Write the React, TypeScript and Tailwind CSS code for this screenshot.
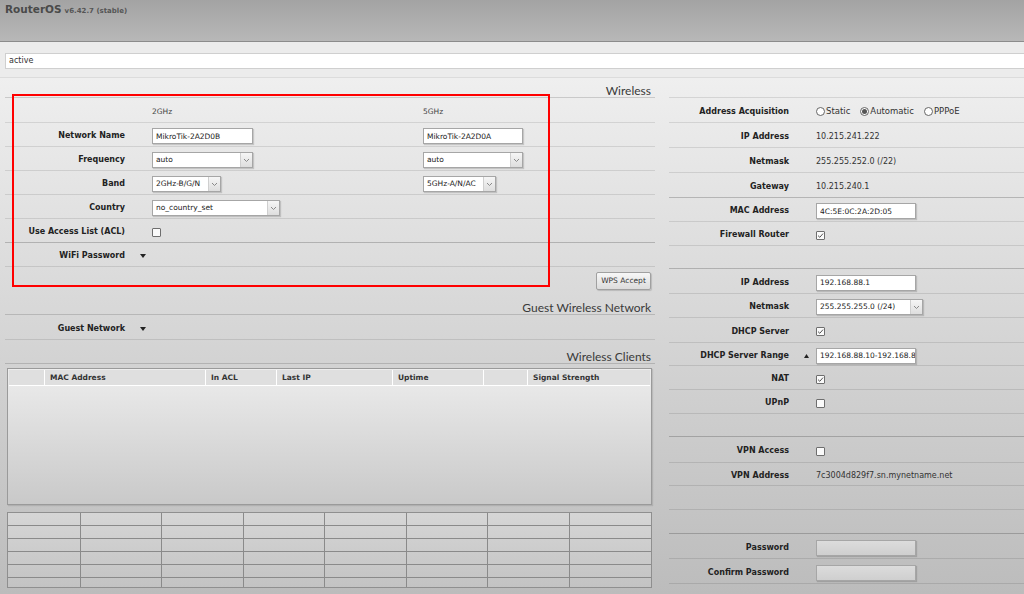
import React from "react";

type Line = "light" | "dark" | "none";

function Chevron() {
  return (
    <svg width="7" height="5" viewBox="0 0 7 5">
      <path d="M1 1 L3.5 3.5 L6 1" fill="none" stroke="#8a8a8a" strokeWidth="1" />
    </svg>
  );
}

function Select({ className, value }: { className: string; value: string }) {
  return (
    <div
      className={`flex h-[16px] items-stretch border border-[#a6a6a6] bg-white shadow-[1px_1px_1px_rgba(0,0,0,0.15)] ${className}`}
    >
      <span className="flex flex-1 items-center overflow-hidden whitespace-nowrap pl-[3px] text-[7.5px] text-[#222]">
        {value}
      </span>
      <span className="flex w-[12px] items-center justify-center border-l border-[#cfcfcf] bg-gradient-to-b from-[#f6f6f6] to-[#dedede]">
        <Chevron />
      </span>
    </div>
  );
}

function Input({ className, value, gray }: { className: string; value?: string; gray?: boolean }) {
  return (
    <input
      readOnly
      value={value ?? ""}
      className={`block h-[16px] border border-[#a6a6a6] pl-[3px] pr-0 text-[7.5px] text-[#222] shadow-[1px_1px_1px_rgba(0,0,0,0.15)] outline-none ${
        gray ? "bg-gradient-to-b from-[#dcdcdc] to-[#cfcfcf]" : "bg-white"
      } ${className}`}
    />
  );
}

function Check({ checked }: { checked?: boolean }) {
  return (
    <div className="flex h-[9px] w-[9px] items-center justify-center rounded-[1px] border border-[#6e6e6e] bg-[#fafafa]">
      {checked && (
        <svg width="7" height="7" viewBox="0 0 7 7">
          <path d="M1 3.6 L2.8 5.3 L6 1.6" fill="none" stroke="#555" strokeWidth="1" />
        </svg>
      )}
    </div>
  );
}

function Radio({ checked, label }: { checked?: boolean; label: string }) {
  return (
    <div className="flex items-center">
      <span className="flex h-[9px] w-[9px] items-center justify-center rounded-full border border-[#666] bg-white">
        {checked && <span className="h-[5px] w-[5px] rounded-full bg-[#555]" />}
      </span>
      <span className="ml-[1px] text-[8.5px] text-[#333]">{label}</span>
    </div>
  );
}

function TriDown() {
  return (
    <svg width="6" height="4" viewBox="0 0 6 4">
      <path d="M0 0 H6 L3 4 Z" fill="#222" />
    </svg>
  );
}

function TriUp() {
  return (
    <svg width="5" height="4" viewBox="0 0 5 4">
      <path d="M0 4 H5 L2.5 0 Z" fill="#222" />
    </svg>
  );
}

function Row({
  h,
  label,
  line = "light",
  gap,
  children,
}: {
  h: string;
  label?: string;
  line?: Line;
  gap?: React.ReactNode;
  children?: React.ReactNode;
}) {
  const lineCls =
    line === "dark" ? "border-b border-black/20" : line === "none" ? "" : "border-b border-black/10";
  return (
    <div className={`flex items-center pt-[3px] ${h} ${lineCls}`}>
      <div className="w-[120px] shrink-0 whitespace-nowrap text-right text-[8px] font-bold text-[#222]">{label}</div>
      <div className="flex w-[27px] shrink-0 items-center pl-[15px]">{gap}</div>
      {children}
    </div>
  );
}

function Val({ children }: { children: React.ReactNode }) {
  return <span className="whitespace-nowrap text-[8px] text-[#333]">{children}</span>;
}

function Heading({ h, children }: { h: string; children: React.ReactNode }) {
  return (
    <div
      className={`flex items-end justify-end border-b border-black/15 pr-[4px] font-['Lato',sans-serif] text-[12px] leading-[12px] text-[#3a3a3a] ${h}`}
    >
      {children}
    </div>
  );
}

function Col({ children }: { children?: React.ReactNode }) {
  return <div className="flex w-[271px] shrink-0 items-center">{children}</div>;
}

export default function App() {
  const rows = [0, 1, 2, 3, 4, 5];
  const cols = [0, 1, 2, 3, 4, 5, 6, 7];
  return (
    <div className="relative flex h-[594px] w-[1024px] flex-col overflow-hidden bg-[#ececec] font-['DejaVu_Sans',sans-serif] text-[#222]">
      {/* header */}
      <div className="flex h-[42px] shrink-0 items-baseline border-b border-[#8c8c8c] bg-gradient-to-b from-[#a3a3a3] to-[#b8b8b8] pl-[5px] pt-[2px] leading-[14px]">
        <span className="text-[10.5px] font-bold text-[#4a4a4a]">RouterOS</span>
        <span className="ml-[3px] text-[7px] font-bold text-[#555]">v6.42.7 (stable)</span>
      </div>

      {/* status */}
      <div className="flex shrink-0 border-b border-[#dcdcdc] pb-[8px] pl-[5px] pt-[11px]">
        <div className="flex h-[16px] flex-1 items-center border border-r-0 border-[#cfcfcf] bg-white pl-[3px] text-[8px] text-[#333]">
          active
        </div>
      </div>

      {/* main */}
      <div className="flex flex-1 bg-gradient-to-b from-[#efefef] to-[#bcbcbc]">
        {/* left column */}
        <div className="ml-[5px] flex w-[650px] shrink-0 flex-col">
          <Heading h="h-[20px]">Wireless</Heading>
          <Row h="h-[25px]">
            <Col>
              <span className="text-[7.5px] text-[#444]">2GHz</span>
            </Col>
            <span className="text-[7.5px] text-[#444]">5GHz</span>
          </Row>
          <Row h="h-[24px]" label="Network Name">
            <Col>
              <Input className="w-[101px]" value="MikroTik-2A2D0B" />
            </Col>
            <Input className="w-[100px]" value="MikroTik-2A2D0A" />
          </Row>
          <Row h="h-[24px]" label="Frequency">
            <Col>
              <Select className="w-[101px]" value="auto" />
            </Col>
            <Select className="w-[100px]" value="auto" />
          </Row>
          <Row h="h-[24px]" label="Band">
            <Col>
              <Select className="w-[69px]" value="2GHz-B/G/N" />
            </Col>
            <Select className="w-[73px]" value="5GHz-A/N/AC" />
          </Row>
          <Row h="h-[24px]" label="Country">
            <Col>
              <Select className="w-[128px]" value="no_country_set" />
            </Col>
          </Row>
          <Row h="h-[24px]" label="Use Access List (ACL)" line="dark">
            <Check />
          </Row>
          <Row h="h-[24px]" label="WiFi Password" gap={<TriDown />} />
          <div className="flex h-[24px] items-center justify-end pr-[4px] pt-[3px]">
            <div className="flex h-[18px] w-[55px] items-center justify-center rounded-[2px] border border-[#a0a0a0] bg-gradient-to-b from-[#f7f7f7] to-[#dcdcdc] text-[7.5px] text-[#333] shadow-[1px_1px_1px_rgba(0,0,0,0.15)]">
              WPS Accept
            </div>
          </div>
          <Heading h="h-[24px]">Guest Wireless Network</Heading>
          <Row h="h-[25px]" label="Guest Network" gap={<TriDown />} />
          <Heading h="h-[24px]">Wireless Clients</Heading>

          {/* clients table */}
          <div className="ml-[2px] mt-[4px] h-[137px] w-[645px] border border-[#9a9a9a] bg-gradient-to-b from-[#ededed] to-[#c9c9c9] p-[1px] shadow-[1px_1px_1px_rgba(0,0,0,0.1)]">
            <div className="flex h-[16px] border-b border-white bg-[#dfdfdf] text-[7.5px] font-bold text-[#333]">
              <div className="w-[35px]" />
              <div className="flex w-[161px] items-center border-l border-white pl-[5px]">MAC Address</div>
              <div className="flex w-[71px] items-center border-l border-white pl-[5px]">In ACL</div>
              <div className="flex w-[116px] items-center border-l border-white pl-[5px]">Last IP</div>
              <div className="flex w-[91px] items-center border-l border-white pl-[5px]">Uptime</div>
              <div className="w-[44px] border-l border-white" />
              <div className="flex flex-1 items-center border-l border-white pl-[5px]">Signal Strength</div>
            </div>
          </div>

          {/* grid table */}
          <div className="ml-[2px] mt-[7px] grid h-[76px] w-[645px] grid-cols-[73px_repeat(7,1fr)] grid-rows-[13px_13px_13px_13px_13px_1fr] border border-[#8f8f8f] bg-gradient-to-b from-[#d6d6d6] to-[#c3c3c3]">
            {rows.map((r) =>
              cols.map((c) => (
                <div
                  key={`${r}-${c}`}
                  className={`border-[#8a8a8a] ${c < 7 ? "border-r" : ""} ${r < 5 ? "border-b" : ""}`}
                />
              ))
            )}
          </div>
        </div>

        {/* right column */}
        <div className="ml-[14px] flex flex-1 flex-col">
          <div className="h-[20px] border-b border-black/10" />
          <Row h="h-[25px]" label="Address Acquisition">
            <div className="flex items-center gap-[10px]">
              <Radio label="Static" />
              <Radio label="Automatic" checked />
              <Radio label="PPPoE" />
            </div>
          </Row>
          <Row h="h-[25px]" label="IP Address">
            <Val>10.215.241.222</Val>
          </Row>
          <Row h="h-[25px]" label="Netmask">
            <Val>255.255.252.0 (/22)</Val>
          </Row>
          <Row h="h-[25px]" label="Gateway" line="dark">
            <Val>10.215.240.1</Val>
          </Row>
          <Row h="h-[24px]" label="MAC Address">
            <Input className="w-[100px]" value="4C:5E:0C:2A:2D:05" />
          </Row>
          <Row h="h-[24px]" label="Firewall Router">
            <Check checked />
          </Row>
          <Row h="h-[23px]" line="dark" />
          <Row h="h-[25px]" label="IP Address">
            <Input className="w-[100px]" value="192.168.88.1" />
          </Row>
          <Row h="h-[24px]" label="Netmask">
            <Select className="w-[107px]" value="255.255.255.0 (/24)" />
          </Row>
          <Row h="h-[25px]" label="DHCP Server">
            <Check checked />
          </Row>
          <Row h="h-[23px]" label="DHCP Server Range" gap={<TriUp />}>
            <Input className="w-[100px]" value="192.168.88.10-192.168.88.254" />
          </Row>
          <Row h="h-[24px]" label="NAT">
            <Check checked />
          </Row>
          <Row h="h-[24px]" label="UPnP">
            <Check />
          </Row>
          <Row h="h-[23px]" line="dark" />
          <Row h="h-[26px]" label="VPN Access">
            <Check />
          </Row>
          <Row h="h-[23px]" label="VPN Address">
            <Val>7c3004d829f7.sn.mynetname.net</Val>
          </Row>
          <Row h="h-[24px]" />
          <Row h="h-[24px]" line="dark" />
          <Row h="h-[25px]" label="Password">
            <Input className="w-[100px]" gray />
          </Row>
          <Row h="h-[25px]" label="Confirm Password">
            <Input className="w-[100px]" gray />
          </Row>
        </div>
      </div>

      {/* red annotation frame */}
      <div className="pointer-events-none absolute left-[12px] top-[94px] h-[193px] w-[538px] border-2 border-[#f00]" />
    </div>
  );
}
